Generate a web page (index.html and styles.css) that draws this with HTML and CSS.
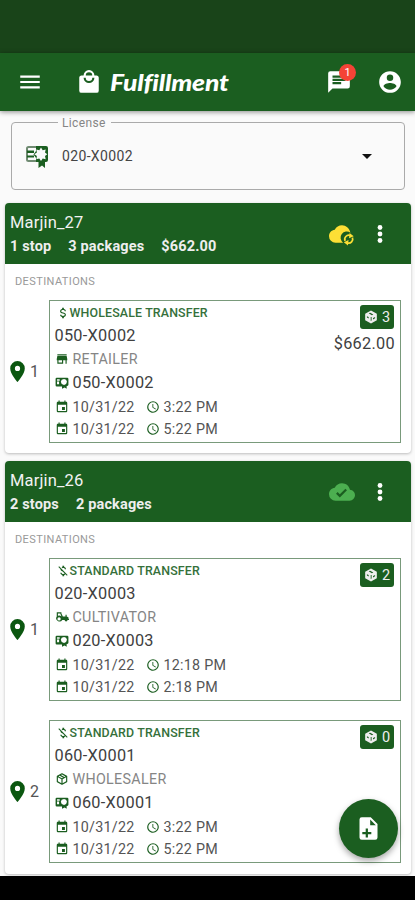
FILE: index.html
```html
<!DOCTYPE html>
<html lang="en">
<head>
<meta charset="utf-8">
<title>Fulfillment</title>
<link rel="stylesheet" href="styles.css">
</head>
<body>
<svg class="sprite" aria-hidden="true">
  <symbol id="menu" viewBox="0 0 24 24"><path d="M3 6h18v2H3zM3 11h18v2H3zM3 16h18v2H3z"/></symbol>
  <symbol id="bag" viewBox="0 0 24 24"><path d="M12,13A5,5 0 0,1 7,8H9A3,3 0 0,0 12,11A3,3 0 0,0 15,8H17A5,5 0 0,1 12,13M12,3A3,3 0 0,1 15,6H9A3,3 0 0,1 12,3M19,6H17A5,5 0 0,0 12,1A5,5 0 0,0 7,6H5C3.89,6 3,6.89 3,8V20A2,2 0 0,0 5,22H19A2,2 0 0,0 21,20V8C21,6.89 20.1,6 19,6Z"/></symbol>
  <symbol id="message" viewBox="0 0 24 24"><path d="M20,2H4A2,2 0 0,0 2,4V22L6,18H20A2,2 0 0,0 22,16V4A2,2 0 0,0 20,2M6,9H18V11H6M14,14H6V12H14M18,8H6V6H18"/></symbol>
  <symbol id="account" viewBox="0 0 24 24"><path d="M12,19.2C9.5,19.2 7.29,17.92 6,16C6.03,14 10,12.9 12,12.9C14,12.9 17.97,14 18,16C16.71,17.92 14.5,19.2 12,19.2M12,5A3,3 0 0,1 15,8A3,3 0 0,1 12,11A3,3 0 0,1 9,8A3,3 0 0,1 12,5M12,2A10,10 0 0,0 2,12A10,10 0 0,0 12,22A10,10 0 0,0 22,12C22,6.47 17.5,2 12,2Z"/></symbol>
  <symbol id="license" viewBox="0 0 24 24"><path class="frame" d="M14 3H3.500Q2 3 2 4.500V15.500Q2 17 3.500 17H13"/><path fill-rule="evenodd" d="M2 6.500H9V9H2ZM2 11.500H9V13.500H2ZM11 2H21A2 2 0 0 1 23 4V16A2 2 0 0 1 21 18H20V24L17 21.500L13.500 24V18H11V14L8.500 10.500L11 7ZM16 3.600L14.300 6.200L11.300 5.500L11.900 8.600L9.300 10.300L11.900 12L11.300 15.200L14.300 14.500L16 17L17.700 14.500L20.700 15.200L20 12L22.300 10.300L20 8.600L20.700 5.500L17.700 6.200Z"/></symbol>
  <symbol id="license-small" viewBox="0 0 24 24"><path fill-rule="evenodd" d="M3 3H21A2 2 0 0 1 23 5V15A2 2 0 0 1 21 17H20V22L16.500 19.500L12 22V18H3A2 2 0 0 1 1 16V5A2 2 0 0 1 3 3ZM3.500 5.500V8H8V5.500ZM3.500 9.500V14H7V9.500ZM15.500 5L11.500 6.500L10 10L11.500 13.500L15.500 15.500L19 13.500L20.500 10L19 6.500Z"/></symbol>
  <symbol id="cloud-check" viewBox="0 0 24 24"><path d="M10,17L6.500,13.500L7.910,12.080L10,14.170L15.180,9L16.590,10.410M19.350,10.030C18.670,6.590 15.640,4 12,4C9.110,4 6.600,5.640 5.350,8.030C2.340,8.360 0,10.900 0,14A6,6 0 0,0 6,20H19A5,5 0 0,0 24,15C24,12.360 21.950,10.220 19.350,10.030Z"/></symbol>
  <symbol id="cloud-sync" viewBox="0 0 24 24"><path d="M19.800 10.800C18.670 6.590 15.640 4 12 4C9.110 4 6.600 5.640 5.350 8.030C2.340 8.360 0 10.900 0 14A6 6 0 0 0 6 20H13A5.600 5.600 0 0 1 19.800 10.800Z"/><path class="sync-line" d="M14.900 18.300A3.700 3.700 0 0 1 19.500 13.300M21.600 15.300A3.700 3.700 0 0 1 17 20.200"/><path d="M19 11L22.800 14L18.500 16zM17.500 22.500L13.700 19.500L18 17.500z"/></symbol>
  <symbol id="dots" viewBox="0 0 24 24"><circle cx="12" cy="5.500" r="2.400"/><circle cx="12" cy="12" r="2.400"/><circle cx="12" cy="18.500" r="2.400"/></symbol>
  <symbol id="pin" viewBox="0 0 24 24"><path d="M12,11.500A2.500,2.500 0 0,1 9.500,9A2.500,2.500 0 0,1 12,6.500A2.500,2.500 0 0,1 14.500,9A2.500,2.500 0 0,1 12,11.500M12,2A7,7 0 0,0 5,9C5,14.250 12,22 12,22C12,22 19,14.250 19,9A7,7 0 0,0 12,2Z"/></symbol>
  <symbol id="calendar" viewBox="0 0 24 24"><path d="M19,19H5V8H19M16,1V3H8V1H6V3H5C3.890,3 3,3.890 3,5V19A2,2 0 0,0 5,21H19A2,2 0 0,0 21,19V5C21,3.890 20.100,3 19,3H18V1M17,12H12V17H17V12Z"/></symbol>
  <symbol id="clock" viewBox="0 0 24 24"><path d="M12,20A8,8 0 0,0 20,12A8,8 0 0,0 12,4A8,8 0 0,0 4,12A8,8 0 0,0 12,20M12,2A10,10 0 0,1 22,12A10,10 0 0,1 12,22C6.470,22 2,17.500 2,12A10,10 0 0,1 12,2M12.500,7V12.250L17,14.920L16.250,16.150L11,13V7H12.500Z"/></symbol>
  <symbol id="usd" viewBox="0 0 24 24"><path d="M7,15H9C9,16.080 10.370,17 12,17C13.630,17 15,16.080 15,15C15,13.900 13.960,13.500 11.760,12.970C9.640,12.440 7,11.780 7,9C7,7.210 8.470,5.690 10.500,5.180V3H13.500V5.180C15.530,5.690 17,7.210 17,9H15C15,7.920 13.630,7 12,7C10.370,7 9,7.920 9,9C9,10.100 10.040,10.500 12.240,11.030C14.360,11.560 17,12.220 17,15C17,16.790 15.530,18.310 13.500,18.820V21H10.500V18.820C8.470,18.310 7,16.790 7,15Z"/></symbol>
  <symbol id="usd-off" viewBox="0 0 24 24"><path d="M12.500 7C14.280 7 14.940 7.850 15 9.100H17.210C17.140 7.380 16.090 5.800 14 5.290V3H11V5.160C10.470 5.280 9.970 5.460 9.500 5.700L11 7.170C11.400 7.060 11.900 7 12.500 7M5.330 4.060L4.060 5.330L7.500 8.770C7.500 10.850 9.060 12 11.410 12.680L14.920 16.190C14.580 16.670 13.870 17.100 12.500 17.100C10.440 17.100 9.630 16.180 9.500 15H7.320C7.440 17.190 9.080 18.420 11 18.830V21H14V18.850C14.960 18.670 15.820 18.300 16.450 17.730L18.670 19.950L19.940 18.680Z"/></symbol>
  <symbol id="store" viewBox="0 0 24 24"><path d="M12,18H6V14H12M21,14V12L20,7H4L3,12V14H4V20H14V14H18V20H20V14M20,4H4V6H20V4Z"/></symbol>
  <symbol id="tractor" viewBox="0 0 24 24"><path fill-rule="evenodd" d="M3 4H11V6L13.500 11H18V8H20V11L23 12.500V15H24V17H21.500A2.500 2.500 0 0 1 16.500 17H12.500A5.500 5.500 0 1 1 3 11ZM5 6V10A5.500 5.500 0 0 1 11 11L9 6ZM7 12.500A2.800 2.800 0 1 0 7 18.100A2.800 2.800 0 1 0 7 12.500Z"/></symbol>
  <symbol id="package" viewBox="0 0 24 24"><path d="M21,16.500C21,16.880 20.790,17.210 20.470,17.380L12.570,21.820C12.410,21.940 12.210,22 12,22C11.790,22 11.590,21.940 11.430,21.820L3.530,17.380C3.210,17.210 3,16.880 3,16.500V7.500C3,7.120 3.210,6.790 3.530,6.620L11.430,2.180C11.590,2.060 11.790,2 12,2C12.210,2 12.410,2.060 12.570,2.180L20.470,6.620C20.790,6.790 21,7.120 21,7.500V16.500M12,4.150L10.110,5.220L16,8.610L17.960,7.500L12,4.150M6.040,7.500L12,10.850L13.960,9.750L8.080,6.350L6.040,7.500M5,15.910L11,19.290V12.580L5,9.210V15.910M19,15.910V9.210L13,12.580V19.290L19,15.910Z"/></symbol>
  <symbol id="package-solid" viewBox="0 0 24 24"><path fill-rule="evenodd" d="M12 1L22 6.500V17.500L12 23L2 17.500V6.500ZM8 5.700L13.500 9L16 7.600L10.500 4.500ZM5 10.500V13L8 14.700V12.200ZM11.500 12V19L13 18V12ZM15.500 13.800V16.200L19 14.200V11.800Z"/></symbol>
  <symbol id="file-plus" viewBox="0 0 24 24"><path fill-rule="evenodd" d="M14,2H6A2,2 0 0,0 4,4V20A2,2 0 0,0 6,22H18A2,2 0 0,0 20,20V8L14,2M13.500,9V4L18.500,9H13.500M11.500,15V12H9.500V15H6.500V17H9.500V20H11.500V17H14.500V15H11.500Z"/></symbol>
</svg>

<div class="status-bar"></div>
<header class="app-bar">
  <svg class="icon menu"><use href="#menu"/></svg>
  <svg class="icon bag"><use href="#bag"/></svg>
  <h1 class="brand">Fulfillment</h1>
  <div class="messages"><svg class="icon"><use href="#message"/></svg><span class="count">1</span></div>
  <svg class="icon account"><use href="#account"/></svg>
</header>

<main class="content">
  <fieldset class="license">
    <legend>License</legend>
    <div class="select">
      <svg class="select-icon"><use href="#license"/></svg>
      <span class="select-value">020-X0002</span>
      <span class="caret"></span>
    </div>
  </fieldset>

  <section class="card">
    <div class="card-head">
      <div class="card-info">
        <h2>Marjin_27</h2>
        <p class="summary"><span>1 stop</span><span>3 packages</span><span>$662.00</span></p>
      </div>
      <svg class="cloud pending"><use href="#cloud-sync"/></svg>
      <svg class="dots"><use href="#dots"/></svg>
    </div>
    <h3>DESTINATIONS</h3>
    <div class="stop">
      <div class="stop-number"><svg class="pin"><use href="#pin"/></svg><span>1</span></div>
      <article class="transfer">
        <div class="details">
          <p class="kind"><svg><use href="#usd"/></svg>WHOLESALE TRANSFER</p>
          <p class="name">050-X0002</p>
          <p class="type"><svg><use href="#store"/></svg>RETAILER</p>
          <p class="number"><svg><use href="#license-small"/></svg>050-X0002</p>
          <p class="time"><svg><use href="#calendar"/></svg><span class="date">10/31/22</span><svg><use href="#clock"/></svg><span>3:22 PM</span></p>
          <p class="time"><svg><use href="#calendar"/></svg><span class="date">10/31/22</span><svg><use href="#clock"/></svg><span>5:22 PM</span></p>
        </div>
        <div class="totals"><span class="chip"><svg><use href="#package-solid"/></svg>3</span><span class="amount">$662.00</span></div>
      </article>
    </div>
  </section>

  <section class="card second">
    <div class="card-head">
      <div class="card-info">
        <h2>Marjin_26</h2>
        <p class="summary"><span>2 stops</span><span>2 packages</span></p>
      </div>
      <svg class="cloud synced"><use href="#cloud-check"/></svg>
      <svg class="dots"><use href="#dots"/></svg>
    </div>
    <h3>DESTINATIONS</h3>
    <div class="stop">
      <div class="stop-number"><svg class="pin"><use href="#pin"/></svg><span>1</span></div>
      <article class="transfer">
        <div class="details">
          <p class="kind"><svg><use href="#usd-off"/></svg>STANDARD TRANSFER</p>
          <p class="name">020-X0003</p>
          <p class="type"><svg><use href="#tractor"/></svg>CULTIVATOR</p>
          <p class="number"><svg><use href="#license-small"/></svg>020-X0003</p>
          <p class="time"><svg><use href="#calendar"/></svg><span class="date">10/31/22</span><svg><use href="#clock"/></svg><span>12:18 PM</span></p>
          <p class="time"><svg><use href="#calendar"/></svg><span class="date">10/31/22</span><svg><use href="#clock"/></svg><span>2:18 PM</span></p>
        </div>
        <div class="totals"><span class="chip"><svg><use href="#package-solid"/></svg>2</span></div>
      </article>
    </div>
    <div class="stop">
      <div class="stop-number"><svg class="pin"><use href="#pin"/></svg><span>2</span></div>
      <article class="transfer">
        <div class="details">
          <p class="kind"><svg><use href="#usd-off"/></svg>STANDARD TRANSFER</p>
          <p class="name">060-X0001</p>
          <p class="type"><svg><use href="#package"/></svg>WHOLESALER</p>
          <p class="number"><svg><use href="#license-small"/></svg>060-X0001</p>
          <p class="time"><svg><use href="#calendar"/></svg><span class="date">10/31/22</span><svg><use href="#clock"/></svg><span>3:22 PM</span></p>
          <p class="time"><svg><use href="#calendar"/></svg><span class="date">10/31/22</span><svg><use href="#clock"/></svg><span>5:22 PM</span></p>
        </div>
        <div class="totals"><span class="chip"><svg><use href="#package-solid"/></svg>0</span></div>
      </article>
    </div>
  </section>
  <button class="fab" aria-label="Add"><svg><use href="#file-plus"/></svg></button>
</main>
<footer class="nav-bar"></footer>
</body>
</html>
```
FILE: styles.css
```css
* { box-sizing: border-box; }
body {
  margin: 0;
  height: 900px;
  display: flex;
  flex-direction: column;
  overflow: hidden;
  background: #fafafa;
  color: #404040;
  font-family: Roboto, sans-serif;
}
h1, h2, h3, p { margin: 0; font-weight: 400; }
svg { display: block; flex: none; fill: currentColor; }
.sprite { position: absolute; width: 0; height: 0; }
.sync-line { fill: none; stroke: currentColor; stroke-width: 1.6; }
.frame { fill: none; stroke: #708b72; stroke-width: 2; }

.status-bar { height: 53px; flex: none; background: #194419; }
.app-bar {
  position: relative;
  height: 58px;
  flex: none;
  display: flex;
  align-items: center;
  padding: 0 12px 0 17px;
  background: #1b5e20;
  color: #fff;
  box-shadow: 0 1px 5px rgba(0, 0, 0, .45);
}
.icon { width: 26px; height: 26px; }
.bag { margin-left: 33px; }
.brand {
  flex: 1;
  padding-left: 8px;
  font: italic 900 23px/30px Lato, sans-serif;
  letter-spacing: -.15px;
  transform: scaleX(1.15);
  transform-origin: 8px 50%;
}
.messages { position: relative; margin-right: 25px; }
.count {
  position: absolute;
  top: -5px;
  right: -4px;
  width: 17px;
  height: 17px;
  border-radius: 50%;
  background: #f44336;
  font-size: 11px;
  line-height: 17px;
  text-align: center;
}

.content { position: relative; height: 765px; flex: none; padding: 5px 4px 0 5px; }
.license {
  height: 74px;
  margin: 0 6px 0;
  padding: 0 32px 0 13px;
  border: 1px solid #aaa;
  border-radius: 4px;
}
.license legend {
  height: 13px;
  margin-left: 33px;
  padding: 0 5px 0 4px;
  font-size: 12px;
  line-height: 14px;
  letter-spacing: .35px;
  color: #858585;
}
.select { height: 54px; display: flex; align-items: center; }
.select-icon { width: 24px; height: 24px; color: #1b5e20; }
.select-value { flex: 1; padding-left: 13px; font-size: 14px; letter-spacing: .35px; color: #454545; }
.caret { border: 5px solid transparent; border-top-color: #111; border-bottom: 0; }

.card {
  height: 250px;
  margin-top: 13px;
  border-radius: 4px;
  background: #fff;
  box-shadow: 0 1px 3px rgba(0, 0, 0, .25);
}
.second { height: 413px; margin-top: 8px; }
.card-head {
  height: 61px;
  display: flex;
  align-items: center;
  padding: 0 18px 0 5px;
  border-radius: 4px 4px 0 0;
  background: #1b5e20;
  color: #fff;
}
.card-info { flex: 1; padding-top: 3px; }
.card-info h2 { font-size: 16.5px; line-height: 24px; letter-spacing: .15px; color: #f2f2f2; }
.summary { display: flex; gap: 17px; font-size: 14.5px; line-height: 24px; font-weight: 700; letter-spacing: .15px; color: #eee; }
.cloud { width: 26px; height: 26px; }
.pending { color: #fddf35; }
.synced { color: #4caf50; }
.dots { width: 26px; height: 24px; margin-left: 12px; }
.card h3 { height: 36px; padding-left: 10px; font-size: 11px; line-height: 35px; letter-spacing: .4px; color: #999; }

.stop { display: flex; align-items: center; padding-right: 10px; }
.stop + .stop { margin-top: 19px; }
.stop-number { width: 43.5px; display: flex; align-items: center; font-size: 16px; color: #555; }
.pin { width: 25px; height: 25px; color: #0b5710; }
.transfer {
  height: 143px;
  flex: 1;
  display: flex;
  justify-content: space-between;
  border: 1px solid #799a7b;
  padding: 0 5px;
}
.details svg { width: 14px; height: 14px; margin-right: 4px; color: #1b5e20; }
.details p { display: flex; align-items: center; white-space: nowrap; }
.details .kind { height: 23px; font-size: 12.4px; font-weight: 500; letter-spacing: .15px; color: #35703a; }
.details .kind svg { margin: 0 0 0 1px; }
.details .name { height: 23px; font-size: 16.3px; letter-spacing: .28px; }
.details .type { height: 24px; font-size: 14.3px; letter-spacing: .3px; color: #858585; }
.details .number { height: 23px; font-size: 16.3px; letter-spacing: .28px; }
.details .time { height: 22px; font-size: 14.3px; letter-spacing: .25px; color: #555; }
.details .number + .time { margin-top: 2px; }
.date { margin-right: 11px; }
.totals { display: flex; flex-direction: column; align-items: flex-end; padding-top: 4px; }
.chip {
  width: 34px;
  height: 24px;
  display: flex;
  align-items: center;
  justify-content: center;
  gap: 4px;
  margin-right: 1px;
  border-radius: 3px;
  background: #1b5e20;
  color: #eee;
  font-size: 14.5px;
}
.chip svg { width: 14px; height: 14px; }
.amount { margin-top: 4px; font-size: 16.3px; line-height: 22px; letter-spacing: .3px; }

.fab {
  position: absolute;
  right: 17px;
  bottom: 18px;
  width: 59px;
  height: 59px;
  display: grid;
  place-items: center;
  padding: 0;
  border: 0;
  border-radius: 50%;
  background: #1b5e20;
  color: #fff;
  box-shadow: 0 3px 6px rgba(0, 0, 0, .35);
}
.fab svg { width: 27px; height: 27px; }
.nav-bar { position: relative; flex: 1; background: #000; }
```
